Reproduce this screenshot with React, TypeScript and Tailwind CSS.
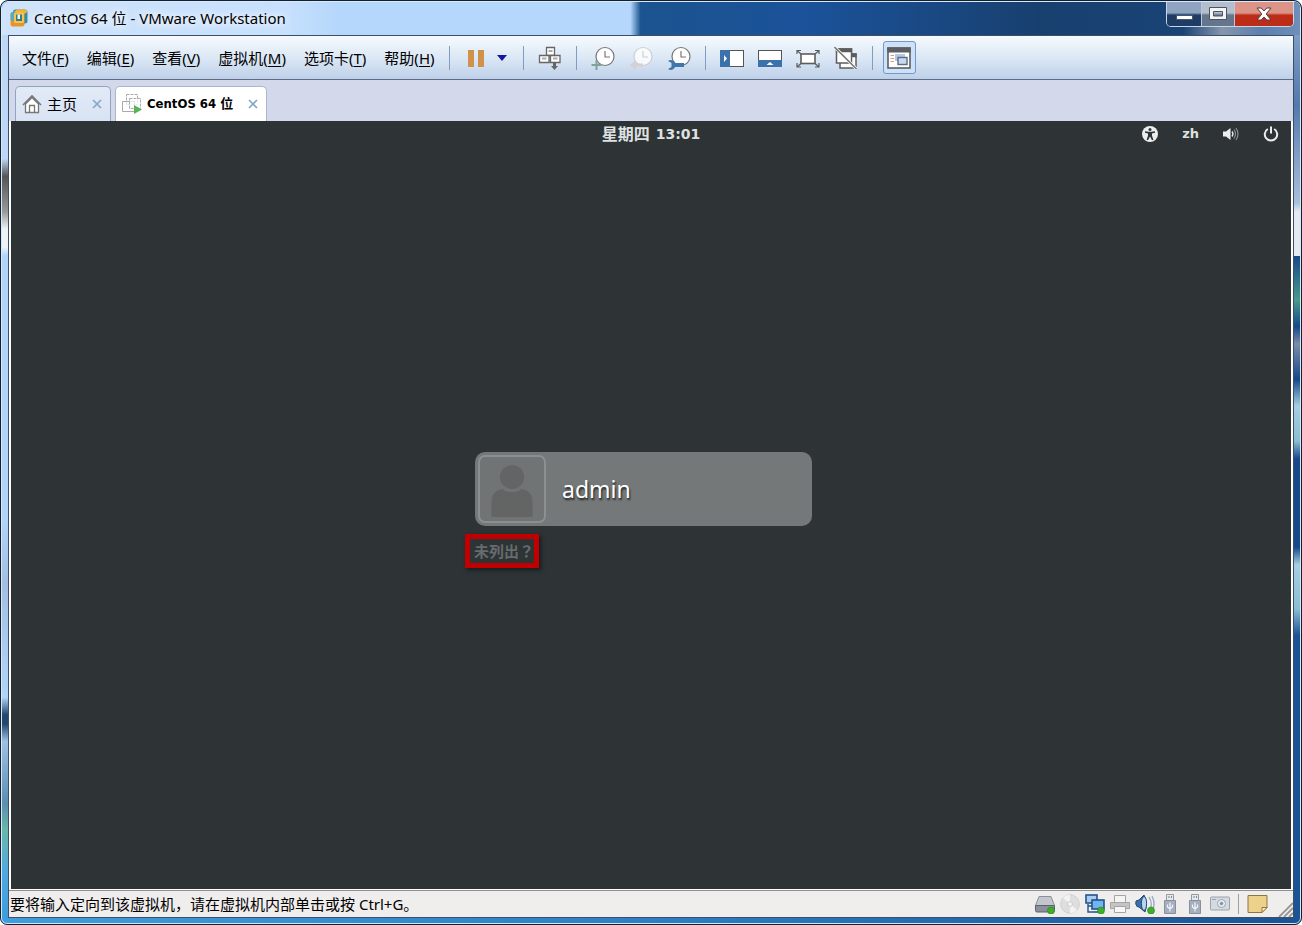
import type { ReactNode } from 'react';

const MENUS = [
  { label: '文件', mnemonic: 'F' },
  { label: '编辑', mnemonic: 'E' },
  { label: '查看', mnemonic: 'V' },
  { label: '虚拟机', mnemonic: 'M' },
  { label: '选项卡', mnemonic: 'T' },
  { label: '帮助', mnemonic: 'H' },
];

function Separator() {
  return <span className="mx-[14px] h-6 w-px shrink-0 bg-[#7f9cc2]" />;
}

function ToolButton({ label, children }: { label: string; children: ReactNode }) {
  return (
    <button type="button" aria-label={label} className="flex size-6 shrink-0 items-center justify-center">
      {children}
    </button>
  );
}

/* ---------- title bar ---------- */

function AppLogo() {
  return (
    <svg width="18" height="18" viewBox="0 0 18 18" className="shrink-0">
      <rect x="3" y="0.5" width="14.5" height="14" rx="2.5" fill="#2f8fae" />
      <rect x="0.5" y="3" width="14" height="14.5" rx="2.5" fill="#e9932c" />
      <path d="M0.6 11V5.500A2.400 2.400 0 0 1 3 3h4L5 13z" fill="#55a9c4" />
      <path d="M4 3l3-2.500h8a2.500 2.500 0 0 1 2.500 2.500L14 5z" fill="#f3b13a" />
      <rect x="4" y="3.500" width="10" height="10.500" rx="1.500" fill="#f8c34b" />
      <rect x="6" y="5.500" width="6" height="6.500" fill="#2e7f97" />
      <path d="M7.500 5.500H10V10H7.500z" fill="#fff2c4" />
    </svg>
  );
}

function WindowControls() {
  return (
    <div className="mr-[6px] flex h-[25px] shrink-0 overflow-hidden rounded-b-[5px] border border-t-0 border-[#c9d6e6] bg-[#32506f]">
      <button type="button" aria-label="最小化" className="flex w-[35px] items-center justify-center border-r border-[#b9c8dc] bg-linear-to-b from-[#8fa4c0] from-45% to-[#1d3c66] to-55%">
        <svg width="17" height="16" viewBox="0 0 17 16">
          <rect x="0.5" y="9.5" width="16" height="4" rx="0.5" fill="#fff" stroke="#45566d" />
        </svg>
      </button>
      <button type="button" aria-label="最大化" className="flex w-[33px] items-center justify-center border-r border-[#b9c8dc] bg-linear-to-b from-[#b4bfcd] from-45% to-[#65758b] to-55%">
        <svg width="18" height="14" viewBox="0 0 18 14">
          <path d="M0.5 0.5h17v12H0.5zM4.500 4.500v4.500h9V4.500z" fill="#f4f4f4" stroke="#4b5463" fillRule="evenodd" />
        </svg>
      </button>
      <button type="button" aria-label="关闭" className="flex w-[58px] items-center justify-center bg-linear-to-b from-[#dc9488] from-45% to-[#bd2c17] to-55%">
        <svg width="16" height="14" viewBox="0 0 16 14">
          <path d="M1 1h4.2L8 4l2.8-3H15l-4.8 6L15 13h-4.2L8 10l-2.8 3H1l4.8-6z" fill="#fff" stroke="#5b3a44" />
        </svg>
      </button>
    </div>
  );
}

function TitleBar() {
  return (
    <header className="flex h-[33px] shrink-0 items-start bg-[linear-gradient(90deg,#cfe3fa_0%,#c6e0fd_22%,#b5d7fb_26%,#b5d7fb_48.4%,#1b548f_49.2%,#1b529a_62%,#18406f_80%,#1a4376_91%,#8796ac_94%,#5c7fae_97%,#6f8fba_100%)]">
      <div className="flex flex-1 items-center gap-[6px] pt-[6px] pl-2">
        <AppLogo />
        <h1 className="text-[15px] leading-5 whitespace-nowrap text-black [text-shadow:0_0_8px_#fff,0_0_8px_#fff]">
          CentOS 64 位 - VMware Workstation
        </h1>
      </div>
      <WindowControls />
    </header>
  );
}

/* ---------- toolbar icons ---------- */

function Clock({ stroke }: { stroke: string }) {
  return (
    <>
      <circle cx="14" cy="10.500" r="9" fill="#fff" stroke={stroke} strokeWidth="1.2" />
      <path d="M14 5v6h5" fill="none" stroke={stroke} strokeWidth="1.2" />
    </>
  );
}

function PauseIcon() {
  return (
    <svg width="24" height="24" viewBox="0 0 24 24">
      <path d="M4 4h6v17H4zM14 4h6v17h-6z" fill="#d0914a" />
    </svg>
  );
}

function SendKeysIcon() {
  return (
    <svg width="24" height="24" viewBox="0 0 24 24" fill="#fff" stroke="#666" strokeWidth="1.3">
      <path d="M8.500 1.500h8v8h-8z" />
      <path d="M1.500 9.500h9.500v7H1.500zM12.500 9.500h9.500v7h-9.500z" />
      <path d="M10.500 5h4M4 12.500h4.500M15 12.500h4.500" stroke="#aaa" strokeWidth="2" />
      <path d="M15 17v3h-2l3.500 4 3.500-4h-2v-3z" fill="#666" stroke="none" />
    </svg>
  );
}

function TakeSnapshotIcon() {
  return (
    <svg width="24" height="24" viewBox="0 0 24 24">
      <Clock stroke="#777" />
      <path d="M5.500 14v10M0.500 19h10" stroke="#7fa39b" strokeWidth="2" />
    </svg>
  );
}

function RevertSnapshotIcon() {
  return (
    <svg width="24" height="24" viewBox="0 0 24 24" opacity="0.8">
      <Clock stroke="#c6cad0" />
      <path d="M1 19l6-5v3.500h7v3H7V24z" fill="#d6cdcb" />
    </svg>
  );
}

function ManageSnapshotIcon() {
  return (
    <svg width="24" height="24" viewBox="0 0 24 24">
      <Clock stroke="#777" />
      <path d="M1 15c3-2 6-0.500 7 2h9v4H8c-1 2.500-4 4-7 2l3.500-2v-4z" fill="#3f76ae" />
    </svg>
  );
}

function LibraryIcon() {
  return (
    <svg width="24" height="24" viewBox="0 0 24 24">
      <rect x="0.5" y="4.5" width="23" height="16" fill="#fff" stroke="#555" />
      <path d="M0 4h10v17H0z" fill="#3c72ab" />
      <path d="M4 9v7l3-3.5z" fill="#fff" />
    </svg>
  );
}

function ThumbnailIcon() {
  return (
    <svg width="24" height="24" viewBox="0 0 24 24">
      <rect x="0.5" y="4.5" width="23" height="16" fill="#fff" stroke="#555" />
      <path d="M0 14h24v7H0z" fill="#3c72ab" />
      <path d="M8.5 19l3.5-3 3.5 3z" fill="#fff" />
    </svg>
  );
}

function FullScreenIcon() {
  return (
    <svg width="24" height="24" viewBox="0 0 24 24" fill="none" stroke="#5d5d5d">
      <rect x="5" y="8" width="14" height="9.5" fill="#fff" strokeWidth="1.6" />
      <path d="M1 8V4.5h4M1 4.5L5 8M23 8V4.5h-4M23 4.5L19 8M1 17v4h4M1 21l4-3.5M23 17v4h-4M23 21l-4-3.500" strokeWidth="1.2" />
    </svg>
  );
}

function UnityIcon() {
  return (
    <svg width="24" height="24" viewBox="0 0 24 24">
      <rect x="6" y="8" width="16" height="14" fill="#fff" stroke="#5d5d5d" strokeWidth="1.5" />
      <path d="M17 7.300h5.700v4H17z" fill="#5d5d5d" />
      <rect x="2.500" y="3" width="15" height="14" fill="#fff" stroke="#5d5d5d" strokeWidth="1.500" />
      <path d="M1.800 2.300h16.400v4H1.800z" fill="#5d5d5d" />
      <path d="M0.500 1l22 22" stroke="#fff" strokeWidth="3" />
      <path d="M0.500 1l22 22" stroke="#777" strokeWidth="1.600" />
    </svg>
  );
}

function ConsoleViewIcon() {
  return (
    <svg width="24" height="24" viewBox="0 0 24 24">
      <rect x="1" y="2" width="22" height="20" fill="#fff" stroke="#5b5f63" strokeWidth="1.6" />
      <path d="M0.200 1.500h23.600v5H0.200z" fill="#5b5f63" />
      <path d="M3.500 9.500H7M3.500 12.500H7M3.500 15.500H7" stroke="#d99b7d" />
      <rect x="8" y="8" width="10" height="7" fill="#b7c8e2" />
      <rect x="11" y="11.500" width="9" height="7" fill="#c6d9ee" stroke="#5b6d84" strokeWidth="1.4" />
    </svg>
  );
}

function MenuBar() {
  return (
    <div className="flex h-11 shrink-0 items-center border-b border-[#5e6d86] bg-linear-to-b from-[#f6fafe] via-[#dce8f5] to-[#bed0e9]">
      <nav className="flex shrink-0 gap-[18px] pl-[13px] text-[15px] leading-5">
        {MENUS.map((menu) => (
          <button key={menu.mnemonic} type="button" className="whitespace-nowrap">
            {menu.label}(<span className="underline underline-offset-2">{menu.mnemonic}</span>)
          </button>
        ))}
      </nav>
      <Separator />
      <ToolButton label="暂停"><PauseIcon /></ToolButton>
      <button type="button" aria-label="电源选项" className="ml-[7px] flex h-6 w-[14px] shrink-0 items-center justify-center">
        <svg width="10" height="6" viewBox="0 0 10 6"><path d="M0 0h10L5 6z" fill="#17179c" /></svg>
      </button>
      <Separator />
      <ToolButton label="发送 Ctrl+Alt+Del"><SendKeysIcon /></ToolButton>
      <Separator />
      <div className="flex gap-[14px]">
        <ToolButton label="拍摄快照"><TakeSnapshotIcon /></ToolButton>
        <ToolButton label="恢复快照"><RevertSnapshotIcon /></ToolButton>
        <ToolButton label="管理快照"><ManageSnapshotIcon /></ToolButton>
      </div>
      <Separator />
      <div className="flex gap-[14px]">
        <ToolButton label="显示库"><LibraryIcon /></ToolButton>
        <ToolButton label="显示缩略图栏"><ThumbnailIcon /></ToolButton>
        <ToolButton label="全屏"><FullScreenIcon /></ToolButton>
        <ToolButton label="Unity"><UnityIcon /></ToolButton>
      </div>
      <Separator />
      <button type="button" aria-label="控制台视图" aria-pressed="true" className="-ml-1 flex size-[33px] shrink-0 items-center justify-center rounded-[3px] border border-[#6d9ad0] bg-[#cfe1f7]">
        <ConsoleViewIcon />
      </button>
    </div>
  );
}

/* ---------- tabs ---------- */

function CloseTab({ label }: { label: string }) {
  return (
    <button type="button" aria-label={label} className="flex size-[10px] items-center justify-center">
      <svg width="10" height="10" viewBox="0 0 10 10">
        <path d="M1 1l8 8M9 1L1 9" stroke="#86a8c4" strokeWidth="1.7" />
      </svg>
    </button>
  );
}

function TabStrip() {
  return (
    <div className="flex h-[41px] shrink-0 items-end gap-1 bg-[#d3d9eb] pl-[6px]">
      <div className="flex h-[35px] w-24 items-center rounded-t-[5px] border border-b-0 border-[#92a4c4] bg-linear-to-b from-[#e3eaf6] to-[#d8e3f4] pl-[6px]">
        <svg width="20" height="20" viewBox="0 0 20 20">
          <path d="M3.5 10v8.500h13V10L10 3.500z" fill="#fff" stroke="#777" strokeWidth="1.3" />
          <path d="M1 11l9-9 9 9" fill="none" stroke="#777" strokeWidth="1.6" />
          <path d="M7.5 18v-6.500h5V18" fill="none" stroke="#777" strokeWidth="1.3" />
        </svg>
        <button type="button" className="mr-[15px] ml-[5px] text-[15px] leading-5">主页</button>
        <CloseTab label="关闭主页" />
      </div>
      <div className="flex h-[35px] w-[152px] items-center rounded-t-[5px] border border-b-0 border-[#a9b6d0] bg-white pr-2 pl-[6px]">
        <svg width="20" height="20" viewBox="0 0 20 20">
          <g fill="#fff" fillOpacity="0.7" stroke="#aaa">
            <path d="M4.5 0.5h11v10h-11z" strokeDasharray="3 1" />
            <path d="M0.5 7.5h12v10h-12z" />
            <path d="M7.5 4.5h11v10h-11z" strokeDasharray="3 1" />
          </g>
          <path d="M12 11v9l8-4.500z" fill="#56b356" />
        </svg>
        <button type="button" className="mr-auto ml-[5px] font-['DejaVu_Sans_Condensed','DejaVu_Sans','Noto_Sans_CJK_SC',sans-serif] text-[13px] leading-5 font-bold whitespace-nowrap">
          CentOS 64 位
        </button>
        <CloseTab label="关闭 CentOS 64 位" />
      </div>
    </div>
  );
}

/* ---------- guest screen ---------- */

function GuestTopBar() {
  return (
    <div className="grid h-[26px] shrink-0 grid-cols-3 items-center font-bold text-[#dfe1e1]">
      <button type="button" className="col-start-2 flex items-center justify-center gap-[6px]">
        <span className="text-base leading-5">星期四</span>
        <span className="font-['DejaVu_Sans',sans-serif] text-[14px] leading-5">13:01</span>
      </button>
      <div className="flex items-center justify-end pr-3">
        <button type="button" aria-label="辅助功能">
          <svg width="16" height="16" viewBox="0 0 16 16">
            <circle cx="8" cy="8" r="8" fill="#eceeee" />
            <circle cx="8" cy="3.4" r="1.5" fill="#2e3436" />
            <path d="M3 5.300l3.500 0.500h3L13 5.300v1.400l-3 0.800v2.300l1.400 4-1.400 0.500L8 10.500l-2 3.800-1.400-0.500 1.400-4V7.500L3 6.700z" fill="#2e3436" />
          </svg>
        </button>
        <button type="button" className="ml-6 font-['DejaVu_Sans',sans-serif] text-[13px] leading-5">zh</button>
        <button type="button" aria-label="音量" className="ml-6">
          <svg width="16" height="16" viewBox="0 0 16 16">
            <path d="M0 5.500h3L7.500 2v12L3 10.500H0z" fill="#eceeee" />
            <path d="M9 5.500q2 2.500 0 5" fill="none" stroke="#eceeee" strokeWidth="1.3" />
            <path d="M11 3.500q3 4.500 0 9M13 2q4 6 0 12" fill="none" stroke="#8a8f90" strokeWidth="1.2" />
          </svg>
        </button>
        <button type="button" aria-label="电源" className="ml-6">
          <svg width="16" height="16" viewBox="0 0 16 16" fill="none" stroke="#eceeee" strokeWidth="2">
            <path d="M4.800 3a6.200 6.200 0 1 0 6.400 0M8 0.500v7" />
          </svg>
        </button>
      </div>
    </div>
  );
}

function LoginScreen() {
  return (
    <main className="mx-[2px] flex flex-1 flex-col bg-[#2e3436]">
      <GuestTopBar />
      <div className="flex flex-1 flex-col items-center justify-center pb-4">
        <div className="flex w-[372px] flex-col items-start gap-2">
          <button type="button" className="ml-[10px] flex h-[74px] w-[337px] items-center gap-4 rounded-[10px] bg-[#747878] pl-[3px]">
            <span className="flex size-[68px] items-end justify-center rounded-[7px] border-2 border-[#8b8f8f] bg-[#707474] pb-1">
              <svg width="42" height="52" viewBox="0 0 42 52" fill="#636565">
                <circle cx="21" cy="12" r="12" />
                <path d="M0.500 52V37c0-8 4-12 12-13 0 4 17 4 17 0 8 1 12 5 12 13v15z" />
              </svg>
            </span>
            <span className="text-[23px] text-white [text-shadow:1px_2px_2px_#222]">admin</span>
          </button>
          <button type="button" className="h-[34px] border-[5px] border-[#c00000] pl-1 font-['Noto_Sans_CJK_JP',sans-serif] text-[15px] leading-5 font-bold whitespace-nowrap text-[#666b6d] shadow-[2px_2px_4px_#15191b]">
            未列出？
          </button>
        </div>
      </div>
    </main>
  );
}

/* ---------- status bar ---------- */

function Dot() {
  return <circle cx="16" cy="16.5" r="3.5" fill="#3fae2a" stroke="#278018" strokeWidth="0.6" />;
}

function UsbShape() {
  return (
    <>
      <path d="M6.5 0.5h7v6h-7z" fill="#e5e8ec" stroke="#929aa6" />
      <path d="M8.5 3h1M11 3h1" stroke="#666" strokeWidth="1.5" />
      <path d="M4.5 6.5h11v13h-11z" fill="#a4afbf" stroke="#8690a0" />
      <path d="M10 8.500v9M7.500 10.500v2.500l2.500 2 2.500-2v-2.500" fill="none" stroke="#f4f6f8" strokeWidth="1.2" />
    </>
  );
}

const DEVICES = [
  {
    label: '硬盘',
    icon: (
      <>
        <path d="M4 2.500h12l3.500 9H0.500z" fill="#c3c7cd" stroke="#8b9098" />
        <path d="M0.500 11.500h19v5q0 1.500-1.500 1.500H2q-1.500 0-1.500-1.500z" fill="#8b919b" stroke="#5d636c" />
        <Dot />
      </>
    ),
  },
  {
    label: 'CD/DVD',
    icon: (
      <>
        <circle cx="10" cy="10" r="9.300" fill="#dedede" stroke="#cfcfcf" />
        <path d="M10 10L3 4a9 9 0 0 1 7-3.300zM10 10l7 6a9 9 0 0 1-7 3.300z" fill="#f3f3f3" />
        <circle cx="10" cy="10" r="2.500" fill="#f3f3f3" stroke="#cfcfcf" />
      </>
    ),
  },
  {
    label: '网络适配器',
    icon: (
      <>
        <rect x="1" y="1" width="11" height="8" fill="#a8cdf2" stroke="#24538c" strokeWidth="1.6" />
        <path d="M3 10v8h6M3 12h4" fill="none" stroke="#24538c" strokeWidth="1.4" />
        <rect x="7" y="6" width="12" height="9" fill="#72b4f0" stroke="#24538c" strokeWidth="1.6" />
        <path d="M9 18h8" stroke="#24538c" strokeWidth="1.6" />
        <Dot />
      </>
    ),
  },
  {
    label: '打印机',
    icon: (
      <g stroke="#a5a5a5">
        <path d="M4.5 1.5h11v8h-11z" fill="#f4f4f4" />
        <path d="M0.5 8.5h19v6h-19z" fill="#c4c4c4" />
        <path d="M4.5 12.5h11v6h-11z" fill="#f7f7f7" />
      </g>
    ),
  },
  {
    label: '声卡',
    icon: (
      <>
        <path d="M1 7l3-1 5-5q4 8 1 17l-6-5-2-0.500Q0 10 1 7z" fill="#3e6fa8" stroke="#234a78" />
        <ellipse cx="9" cy="9.500" rx="2.600" ry="7" fill="#b9d4ee" stroke="#234a78" />
        <path d="M14 3q4 6 1 13M17 2q3.500 7 1 13" fill="none" stroke="#8fa9c4" strokeWidth="1.3" />
        <Dot />
      </>
    ),
  },
  { label: 'USB 1', icon: <UsbShape /> },
  { label: 'USB 2', icon: <UsbShape /> },
  {
    label: '摄像头',
    icon: (
      <g stroke="#9aa3ae">
        <rect x="0.5" y="3" width="19" height="13" rx="1" fill="#d3dae2" />
        <path d="M2 5.500h4" />
        <circle cx="11.500" cy="9.500" r="4" fill="#eef2f6" />
        <circle cx="11.500" cy="9.500" r="1.500" fill="#7f8b98" />
      </g>
    ),
  },
];

function StatusBar() {
  return (
    <footer className="flex h-[27px] shrink-0 items-center border-t border-[#8e8e8e] bg-[#f0eded] pl-px">
      <p className="flex-1 text-[15px] leading-5 whitespace-nowrap">要将输入定向到该虚拟机，请在虚拟机内部单击或按 Ctrl+G。</p>
      <div className="flex gap-[5px]">
        {DEVICES.map((device) => (
          <button key={device.label} type="button" aria-label={device.label} className="size-5">
            <svg width="20" height="20" viewBox="0 0 20 20">{device.icon}</svg>
          </button>
        ))}
      </div>
      <span className="mx-2 h-5 w-px bg-[#a0a0a0]" />
      <button type="button" aria-label="消息日志">
        <svg width="21" height="20" viewBox="0 0 21 20">
          <path d="M1 1.500h19v12l-5 5H1z" fill="#ecd18a" stroke="#8d7740" />
          <path d="M20 13.500h-5v5z" fill="#fff0bd" stroke="#8d7740" />
        </svg>
      </button>
      <svg width="15" height="15" viewBox="0 0 15 15" className="ml-[10px] self-end">
        <path d="M1 15L15 1M6 15l9-9M11 15l4-4" stroke="#969696" strokeWidth="1.8" />
      </svg>
    </footer>
  );
}

export default function App() {
  return (
    <div className="flex min-h-screen flex-col overflow-hidden rounded-t-[8px] rounded-b-[7px] border border-[#12202f] bg-[linear-gradient(90deg,#3f9ddd,#2b7fc6_50%,#1b5394)] font-['Noto_Sans','Noto_Sans_CJK_SC',sans-serif] text-black">
      <div className="flex flex-1 flex-col overflow-hidden rounded-t-[7px] rounded-b-[6px] border border-[#d8eafa]">
        <TitleBar />
        <div className="flex flex-1">
          <div className="w-[6px] shrink-0 bg-[linear-gradient(#bcd8f6_0%,#bcd8f6_14%,#555_16%,#999_20%,#eef3f8_22%,#eef3f8_24%,#b2d4fa_25%,#b2d4fa_55%,#a3bfe3_62%,#b2d4fa_75%,#24476f_77%,#24476f_78%,#9fc0e6_80%,#5b8fb2_87%,#69b7a8_90%,#4fa9e0_95%,#3f9ddd_100%)]" />
          <div className="flex min-w-0 flex-1 flex-col border border-[#3d4f66] bg-white">
            <MenuBar />
            <TabStrip />
            <LoginScreen />
            <div className="h-px shrink-0 bg-white" />
            <StatusBar />
          </div>
          <div className="w-[6px] shrink-0 bg-[linear-gradient(#7d9bc5_0%,#5479ac_8%,#8ba6cb_15%,#a9bfdd_19%,#e4e9f2_20%,#e4e9f2_25%,#17488a_25%,#4a9a8c_30%,#17488a_33%,#7b8ca8_35%,#17488a_39%,#a6cfe0_42%,#8dbcd2_46%,#17488a_48%,#17488a_58%,#a6cfe0_60%,#8dbcd2_65%,#1b5394_68%,#1b5394_100%)]" />
        </div>
        <div className="h-[5px] shrink-0" />
      </div>
    </div>
  );
}
